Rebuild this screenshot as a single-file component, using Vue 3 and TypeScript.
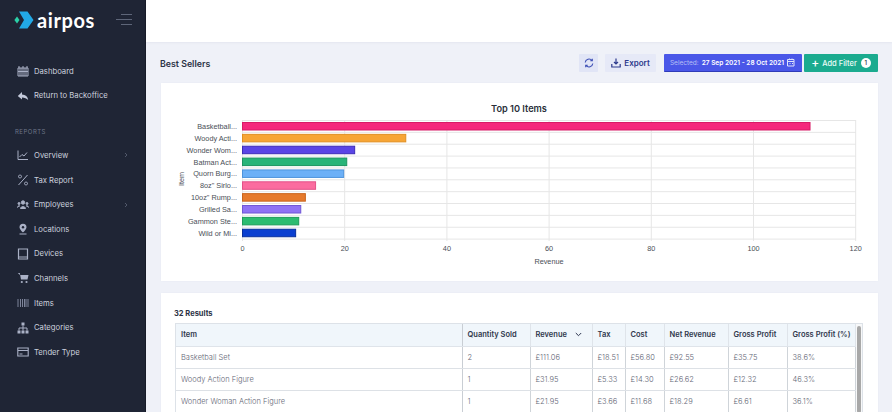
<script setup lang="ts">
interface NavItem { label: string; icon: string; arrow?: boolean }
const top: NavItem[] = [
  { label: 'Dashboard', icon: 'dash' },
  { label: 'Return to Backoffice', icon: 'back' },
]
const reports: NavItem[] = [
  { label: 'Overview', icon: 'chart', arrow: true },
  { label: 'Tax Report', icon: 'pct' },
  { label: 'Employees', icon: 'users', arrow: true },
  { label: 'Locations', icon: 'pin' },
  { label: 'Devices', icon: 'tablet' },
  { label: 'Channels', icon: 'cart' },
  { label: 'Items', icon: 'bars' },
  { label: 'Categories', icon: 'tree' },
  { label: 'Tender Type', icon: 'card' },
]
const px = 5.11
const x0 = 81.5
const bars = [
  { n: 'Basketball...', v: 111.06, c: '#f5287c', e: '#d81b66' },
  { n: 'Woody Acti...', v: 31.95, c: '#f7a535', e: '#e08f22' },
  { n: 'Wonder Wom...', v: 21.95, c: '#5a45e6', e: '#3c2cb8' },
  { n: 'Batman Act...', v: 20.4, c: '#28b478', e: '#1c9460' },
  { n: 'Quorn Burg...', v: 19.8, c: '#6cb0f7', e: '#4f94dc' },
  { n: '8oz" Sirlo...', v: 14.3, c: '#fb6c9f', e: '#e35288' },
  { n: '10oz" Rump...', v: 12.3, c: '#e67a2c', e: '#c9641c' },
  { n: 'Grilled Sa...', v: 11.4, c: '#8f72f5', e: '#7057d6' },
  { n: 'Gammon Ste...', v: 11, c: '#2cbc70', e: '#1f9c5a' },
  { n: 'Wild or Mi...', v: 10.4, c: '#0a3fd0', e: '#082f9c' },
]
const ticks = [0, 20, 40, 60, 80, 100, 120]
const columns = ['Item', 'Quantity Sold', 'Revenue', 'Tax', 'Cost', 'Net Revenue', 'Gross Profit', 'Gross Profit (%)']
const rows = [
  ['Basketball Set', '2', '£111.06', '£18.51', '£56.80', '£92.55', '£35.75', '38.6%'],
  ['Woody Action Figure', '1', '£31.95', '£5.33', '£14.30', '£26.62', '£12.32', '46.3%'],
  ['Wonder Woman Action Figure', '1', '£21.95', '£3.66', '£11.68', '£18.29', '£6.61', '36.1%'],
]
const widths = [286, 68, 62, 33, 39, 64, 59, 68]
</script>

<template>
  <div class="app">
    <aside class="side">
      <div class="brand">
        <svg class="logo" width="20" height="20" viewBox="0 0 20 20">
          <path d="M5 1.500h8.500L19.500 10l-6 8.500H5L10 10z" fill="#22a9e6" />
          <path d="M3 6.500L.4 10 3 13.500 5.500 10z" fill="#2bd0a8" />
        </svg>
        <span class="word">airpos</span>
        <svg class="burger" width="16" height="12" viewBox="0 0 16 12">
          <path d="M5 .5h11M0 5.500h16M5 10.500h11" stroke="#5e6679" stroke-width="1" />
        </svg>
      </div>
      <nav class="group first">
        <a v-for="n in top" :key="n.label" class="nav">
          <svg class="ico" width="12" height="12" viewBox="0 0 12 12" fill="none" stroke="#aab1c6" stroke-width="1">
            <path v-if="n.icon === 'dash'" d="M1 3h10v8H1zM1 6.500h10M3 3v8M5 3v8M7 3v8M9 3v8M2 1v2M6 1v2M10 1v2" />
            <path v-else d="M5 2L.8 6 5 9.500V7.400c2.600 0 4.600.8 6.200 2.600C10.800 6.600 8.600 4.600 5 4.400z" fill="#c3c9da" stroke="none" />
          </svg>
          <span>{{ n.label }}</span>
        </a>
      </nav>
      <div class="caption">REPORTS</div>
      <nav class="group">
        <a v-for="n in reports" :key="n.label" class="nav">
          <svg class="ico" width="12" height="12" viewBox="0 0 12 12" fill="none" stroke="#aab1c6" stroke-width="1">
            <path v-if="n.icon === 'chart'" d="M1 1.500v9h10M2.500 8l2.500-2.500 2 1.500 3-3.500" />
            <path v-else-if="n.icon === 'pct'" d="M10.500 1l-9 10M3 1a1.500 1.500 0 1 0 .01 0zM9 8a1.500 1.500 0 1 0 .01 0z" />
            <g v-else-if="n.icon === 'users'">
              <circle cx="6" cy="3.500" r="1.700" fill="#aab1c6" />
              <path d="M3.500 9.500c0-2.500 5-2.500 5 0zM.5 8.500c0-1.500 1.500-2 2.500-1.500M11.500 8.500c0-1.500-1.500-2-2.500-1.500" fill="#aab1c6" />
              <circle cx="2" cy="4.500" r="1" fill="#aab1c6" />
              <circle cx="10" cy="4.500" r="1" fill="#aab1c6" />
            </g>
            <g v-else-if="n.icon === 'pin'">
              <path d="M6 .8a3.500 3.500 0 0 0-3.500 3.500C2.500 6.500 6 9.500 6 9.500s3.500-3 3.500-5.200A3.500 3.500 0 0 0 6 .8z" fill="#aab1c6" stroke="none" />
              <circle cx="6" cy="4.300" r="1.200" fill="#1f2535" stroke="none" />
              <path d="M2.500 11h7" />
            </g>
            <path v-else-if="n.icon === 'tablet'" d="M1.500 1h9v10h-9zM1.500 9h9" stroke-width="1.200" />
            <g v-else-if="n.icon === 'cart'">
              <path d="M.8 1h2l1.200 6.500h6.500L11.500 3H3" fill="#aab1c6" stroke="none" />
              <circle cx="4.800" cy="10" r="1.100" fill="#aab1c6" stroke="none" />
              <circle cx="9.500" cy="10" r="1.100" fill="#aab1c6" stroke="none" />
            </g>
            <path v-else-if="n.icon === 'bars'" d="M1 2v8M3.500 2v8M5.500 2v8M7.500 2v8M9 2v8M11 2v8" stroke="#7d849a" />
            <g v-else-if="n.icon === 'tree'" fill="#aab1c6">
              <rect x="4.500" y=".5" width="3" height="3" stroke="none" />
              <rect x=".5" y="8.500" width="3" height="3" stroke="none" />
              <rect x="4.500" y="8.500" width="3" height="3" stroke="none" />
              <rect x="8.500" y="8.500" width="3" height="3" stroke="none" />
              <path d="M6 3.500v5M2 8.500V6h8v2.500" fill="none" />
            </g>
            <path v-else d="M.8 2h10.400v8H.8zM.8 4.500h10.400M2.500 8h3" stroke-width="1.100" />
          </svg>
          <span class="lbl">{{ n.label }}</span>
          <svg v-if="n.arrow" class="arrow" width="4" height="6" viewBox="0 0 4 6">
            <path d="M1 1l2 2-2 2" fill="none" stroke="#5e6679" stroke-width=".8" />
          </svg>
        </a>
      </nav>
    </aside>

    <main class="main">
      <div class="topbar"></div>
      <div class="content">
        <header class="head">
          <h1>Best Sellers</h1>
          <div class="actions">
            <button class="btn icon-btn">
              <svg width="10" height="10" viewBox="0 0 10 10" fill="none" stroke="#3d4fb5" stroke-width="1.100">
                <path d="M1.200 4.500A3.800 3.800 0 0 1 8 2.600M8.800 5.500A3.800 3.800 0 0 1 2 7.400M8.300 .8v2H6.300M1.700 9.200v-2h2" />
              </svg>
            </button>
            <button class="btn export">
              <svg width="10" height="10" viewBox="0 0 10 10" fill="none" stroke="#2d3a8c" stroke-width="1.200">
                <path d="M5 .5v5.500M3 4l2 2 2-2" />
                <path d="M.8 6v3h8.400V6" />
              </svg>
              Export
            </button>
            <button class="btn selected">
              <span class="sel-a">Selected:</span>
              <span class="sel-b">27 Sep 2021 - 28 Oct 2021</span>
              <svg width="9" height="9" viewBox="0 0 9 9" fill="none" stroke="#dfe3fb" stroke-width="1">
                <path d="M.5 1.500h6.500v6.500H.5zM.5 3.500h6.500M2.500 .5v1M5 .5v1M2.500 5.500h1M5 5.500h1" />
              </svg>
            </button>
            <button class="btn add">
              <span class="plus">+</span>
              Add Filter
              <span class="count">1</span>
            </button>
          </div>
        </header>

        <section class="card chart">
          <svg width="717" height="198" viewBox="0 0 717 198">
            <text x="358" y="29" text-anchor="middle" class="ct">Top 10 Items</text>
            <g stroke="#e6e6e6" stroke-width="1">
              <line v-for="t in ticks" :key="t" :x1="x0 + t * px" y1="37" :x2="x0 + t * px" y2="158" />
              <line v-for="i in 11" :key="i" :x1="x0" :y1="37.500 + (i - 1) * 11.860" x2="695" :y2="37.500 + (i - 1) * 11.860" />
            </g>
            <g v-for="(b, i) in bars" :key="b.n">
              <rect :x="x0" :y="39.500 + i * 11.860" :width="b.v * px" height="7.500" :fill="b.c" :stroke="b.e" stroke-width="1" />
              <text :x="76" :y="46 + i * 11.860" text-anchor="end" class="yl">{{ b.n }}</text>
            </g>
            <text v-for="t in ticks" :key="'t' + t" :x="x0 + t * px" y="168" text-anchor="middle" class="yl">{{ t }}</text>
            <text x="388" y="181" text-anchor="middle" class="yl">Revenue</text>
            <text x="0" y="0" text-anchor="middle" class="yl" transform="translate(22.500 96) rotate(-90)">Item</text>
          </svg>
        </section>

        <section class="card results">
          <div class="count-line">32 Results</div>
          <div class="table-wrap">
            <table>
              <colgroup>
                <col v-for="(w, i) in widths" :key="i" :style="{ width: w + 'px' }" />
              </colgroup>
              <thead>
                <tr>
                  <th v-for="c in columns" :key="c">
                    {{ c }}
                    <svg v-if="c === 'Revenue'" class="sort" width="7" height="5" viewBox="0 0 7 5">
                      <path d="M.8 1l2.700 2.700L6.200 1" fill="none" stroke="#2d3550" stroke-width="1" />
                    </svg>
                  </th>
                </tr>
              </thead>
              <tbody>
                <tr v-for="r in rows" :key="r[0]">
                  <td v-for="(v, i) in r" :key="i">{{ v }}</td>
                </tr>
              </tbody>
            </table>
            <div class="scroll"><div class="thumb"></div></div>
          </div>
        </section>
      </div>
    </main>
  </div>
</template>

<style>
html, body { margin: 0; padding: 0; overflow: hidden; }
</style>

<style scoped>
.app {
  display: flex;
  width: 892px;
  height: 412px;
  overflow: hidden;
  font-family: "Inter", "Noto Sans", sans-serif;
  background: #eff1f8;
}
.side {
  width: 146px;
  flex: none;
  background: #1f2535;
  color: #d5d9e4;
  box-sizing: border-box;
  border-right: 1px solid #171b28;
}
.brand {
  display: flex;
  align-items: center;
  height: 20px;
  padding: 10px 13px 0 14px;
}
.logo { flex: none; }
.word {
  margin-left: 3px;
  color: #fff;
  font-family: "Lato", sans-serif;
  font-size: 20px;
  font-weight: 700;
  line-height: 20px;
  letter-spacing: .6px;
  flex: 1;
}
.group.first { margin-top: 29px; }
.nav {
  display: flex;
  align-items: center;
  height: 24.600px;
  padding-left: 16px;
  font-size: 7.700px;
  color: #ccd1de;
}
.ico { flex: none; margin-right: 5px; margin-left: 1px; }
.lbl { flex: 1; }
.arrow { margin-right: 17px; }
.caption {
  margin: 18px 0 5px 15px;
  height: 12px;
  line-height: 12px;
  font-size: 6px;
  letter-spacing: .5px;
  color: #6e7689;
}
.main { flex: 1; min-width: 0; display: flex; flex-direction: column; }
.topbar { height: 42px; background: #fff; flex: none; box-shadow: 0 1px 2px rgba(60,70,110,.06); }
.content { padding: 12px 14px 0 15px; }
.head {
  display: flex;
  align-items: center;
  justify-content: space-between;
  height: 18px;
  margin-bottom: 11px;
}
h1 { margin: 0 0 0 -1px; font-size: 8.800px; font-weight: 600; color: #2b3245; }
.actions { display: flex; align-items: stretch; height: 18px; }
.btn {
  border: 0;
  padding: 0;
  display: flex;
  align-items: center;
  justify-content: center;
  font-family: inherit;
  font-size: 8px;
  font-weight: 600;
  border-radius: 1px;
  box-sizing: border-box;
}
.icon-btn { width: 19px; background: #e1e5f6; margin-right: 7px; }
.export { width: 51px; background: #e6e9f7; color: #2d3a8c; gap: 3px; margin-right: 8px; }
.selected { width: 138px; background: #4a57e8; border-bottom: 1px solid #2f3bb8; margin-right: 2px; gap: 3px; color: #fff; font-size: 6.500px; }
.sel-a { font-weight: 400; color: #b9c0f5; }
.add { width: 74px; background: #1bab8f; color: #e9fbf6; gap: 3px; font-size: 7.500px; font-weight: 500; }
.plus { font-size: 12px; line-height: 12px; font-weight: 500; color: #fff; }
.count {
  width: 10px;
  height: 10px;
  border-radius: 50%;
  background: #fff;
  color: #1a1f30;
  font-size: 6px;
  line-height: 10px;
  margin-left: 1px;
}
.card { background: #fff; box-shadow: 0 0 2px rgba(80,90,130,.05); }
.chart { height: 198px; margin-bottom: 12px; }
.chart svg { display: block; }
.ct { font-size: 9.200px; font-weight: 600; fill: #2a2f3a; }
.yl { font-size: 7.300px; fill: #4a4f57; font-family: "Liberation Sans", sans-serif; }
.results { padding: 15px 16px 0 14px; height: 130px; box-sizing: border-box; }
.count-line { font-size: 7.500px; font-weight: 700; color: #2b3245; height: 15px; line-height: 12px; margin-left: -1px; }
.table-wrap {
  display: flex;
  width: 688px;
  border: 1px solid #dde2e8;
  border-bottom: 0;
  box-sizing: border-box;
}
table {
  border-collapse: collapse;
  table-layout: fixed;
  width: 679px;
  flex: none;
}
th {
  height: 22px;
  padding: 0 0 0 5px;
  background: #f0f6fb;
  font-size: 7.500px;
  font-weight: 600;
  color: #2f374c;
  text-align: left;
  border-right: 1px solid #dfe4ea;
  border-bottom: 1px solid #dfe4ea;
  white-space: nowrap;
  box-sizing: border-box;
}
th:first-child, td:first-child { border-right-color: #c9ced4; }
td {
  height: 22px;
  padding: 0 0 0 5px;
  font-size: 7.500px;
  font-weight: 300;
  color: #5f6675;
  border-right: 1px solid #cfd4d9;
  border-bottom: 1px solid #dde1e6;
  white-space: nowrap;
  box-sizing: border-box;
}
.sort { margin-left: 6px; }
.scroll { flex: 1; background: #f7f8f9; padding: 2px 1.500px 0; }
.thumb { height: 100%; background: #a8a8a8; border-radius: 3px; }
</style>
